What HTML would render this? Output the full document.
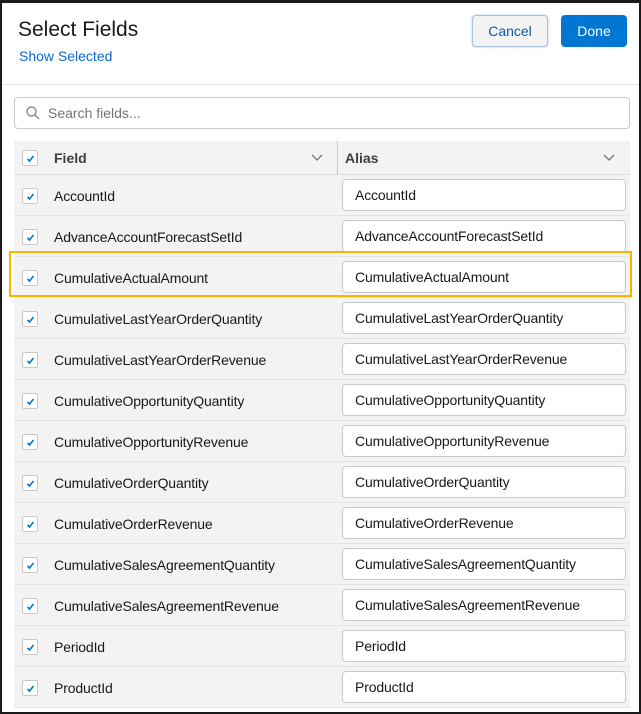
<!DOCTYPE html>
<html><head><meta charset="utf-8"><style>
*{box-sizing:border-box;margin:0;padding:0}
body{width:641px;height:714px;overflow:hidden;background:#fff;font-family:"Liberation Sans",Arial,sans-serif;color:#181818;position:relative}
.frame{position:absolute;left:0;top:0;width:641px;height:714px;border:2px solid #1a1a1a;border-top-width:3px}
h1{position:absolute;left:18px;top:18px;font-size:21px;font-weight:400;color:#181818}
.show{position:absolute;left:19px;top:48px;font-size:14px;color:#0b6ad0}
.btn{position:absolute;top:15px;height:32px;border-radius:4px;font-size:14px;display:flex;align-items:center;justify-content:center}
.cancel{left:472px;width:76px;background:#f3f3f3;border:1px solid #a9c0dc;box-shadow:0 0 2px #a9c5e6;color:#0b5cab}
.done{left:561px;width:66px;background:#0176d3;color:#fff}
.sep{position:absolute;left:2px;right:2px;top:84px;border-top:1px solid #e5e5e5}
.search{position:absolute;left:14px;top:97px;width:616px;height:32px;border:1px solid #c9c9c9;border-radius:4px;font-size:14px;color:#747474;padding-left:33px;line-height:30px}
.search svg{position:absolute;left:11px;top:8px}
.table{position:absolute;left:14px;top:141px;width:616px}
.hdr{height:34px;background:#f3f3f3;border-bottom:1px solid #e0e0e0;position:relative;font-weight:700;font-size:14px;color:#3e3e3c}
.row{height:41px;background:#f3f3f3;border-bottom:1px solid #e5e5e5;position:relative;font-size:14px;letter-spacing:-0.15px}
.cb{position:absolute;left:8px;width:16px;height:16px;border:1px solid #c9c9c9;border-radius:2px;background:#fff}
.cb svg{position:absolute;left:3px;top:3px}
.hdr .cb{top:9px}.row .cb{top:13px}
.lbl{position:absolute;left:40px;top:13px}
.hdr .lbl{top:9px}
.inp{position:absolute;left:328px;top:4px;width:284px;height:32px;background:#fff;border:1px solid #c9c9c9;border-radius:4px;padding-left:12px;line-height:30px}
.hl{position:absolute;left:9px;top:251px;width:623px;height:46px;border:2px solid #f7b500}
</style></head><body>
<h1>Select Fields</h1>
<div class="show">Show Selected</div>
<div class="btn cancel">Cancel</div>
<div class="btn done">Done</div>
<div class="sep"></div>
<div class="search"><svg width="14" height="14" viewBox="0 0 14 14"><circle cx="5.5" cy="5.5" r="4.5" fill="none" stroke="#888" stroke-width="1.4"/><path d="M9 9l4 4" stroke="#888" stroke-width="1.4"/></svg>Search fields...</div>
<div class="table">
<div class="hdr"><div class="cb"><svg width="9" height="9" viewBox="0 0 9 9"><path d="M1.5 5l2 2 4-5" fill="none" stroke="#0176d3" stroke-width="1.6"/></svg></div><span class="lbl">Field</span>
<svg style="position:absolute;left:297px;top:13px" width="12" height="8" viewBox="0 0 12 8"><path d="M1 1l5 5 5-5" fill="none" stroke="#747474" stroke-width="1.3"/></svg>
<div style="position:absolute;left:323px;top:0;height:34px;border-left:1px solid #c9c9c9"></div>
<span style="position:absolute;left:331px;top:9px">Alias</span>
<svg style="position:absolute;left:589px;top:13px" width="12" height="8" viewBox="0 0 12 8"><path d="M1 1l5 5 5-5" fill="none" stroke="#747474" stroke-width="1.3"/></svg>
</div>
</div>
<div class="hl"></div>
<div class="frame"></div>
<script>
var n=["AccountId","AdvanceAccountForecastSetId","CumulativeActualAmount","CumulativeLastYearOrderQuantity","CumulativeLastYearOrderRevenue","CumulativeOpportunityQuantity","CumulativeOpportunityRevenue","CumulativeOrderQuantity","CumulativeOrderRevenue","CumulativeSalesAgreementQuantity","CumulativeSalesAgreementRevenue","PeriodId","ProductId"];
var t=document.querySelector('.table'),h='';
n.forEach(function(x){h+='<div class="row"><div class="cb"><svg width="9" height="9" viewBox="0 0 9 9"><path d="M1.5 5l2 2 4-5" fill="none" stroke="#0176d3" stroke-width="1.6"/></svg></div><span class="lbl">'+x+'</span><div class="inp">'+x+'</div></div>'});
t.insertAdjacentHTML('beforeend',h);
</script>
</body></html>
